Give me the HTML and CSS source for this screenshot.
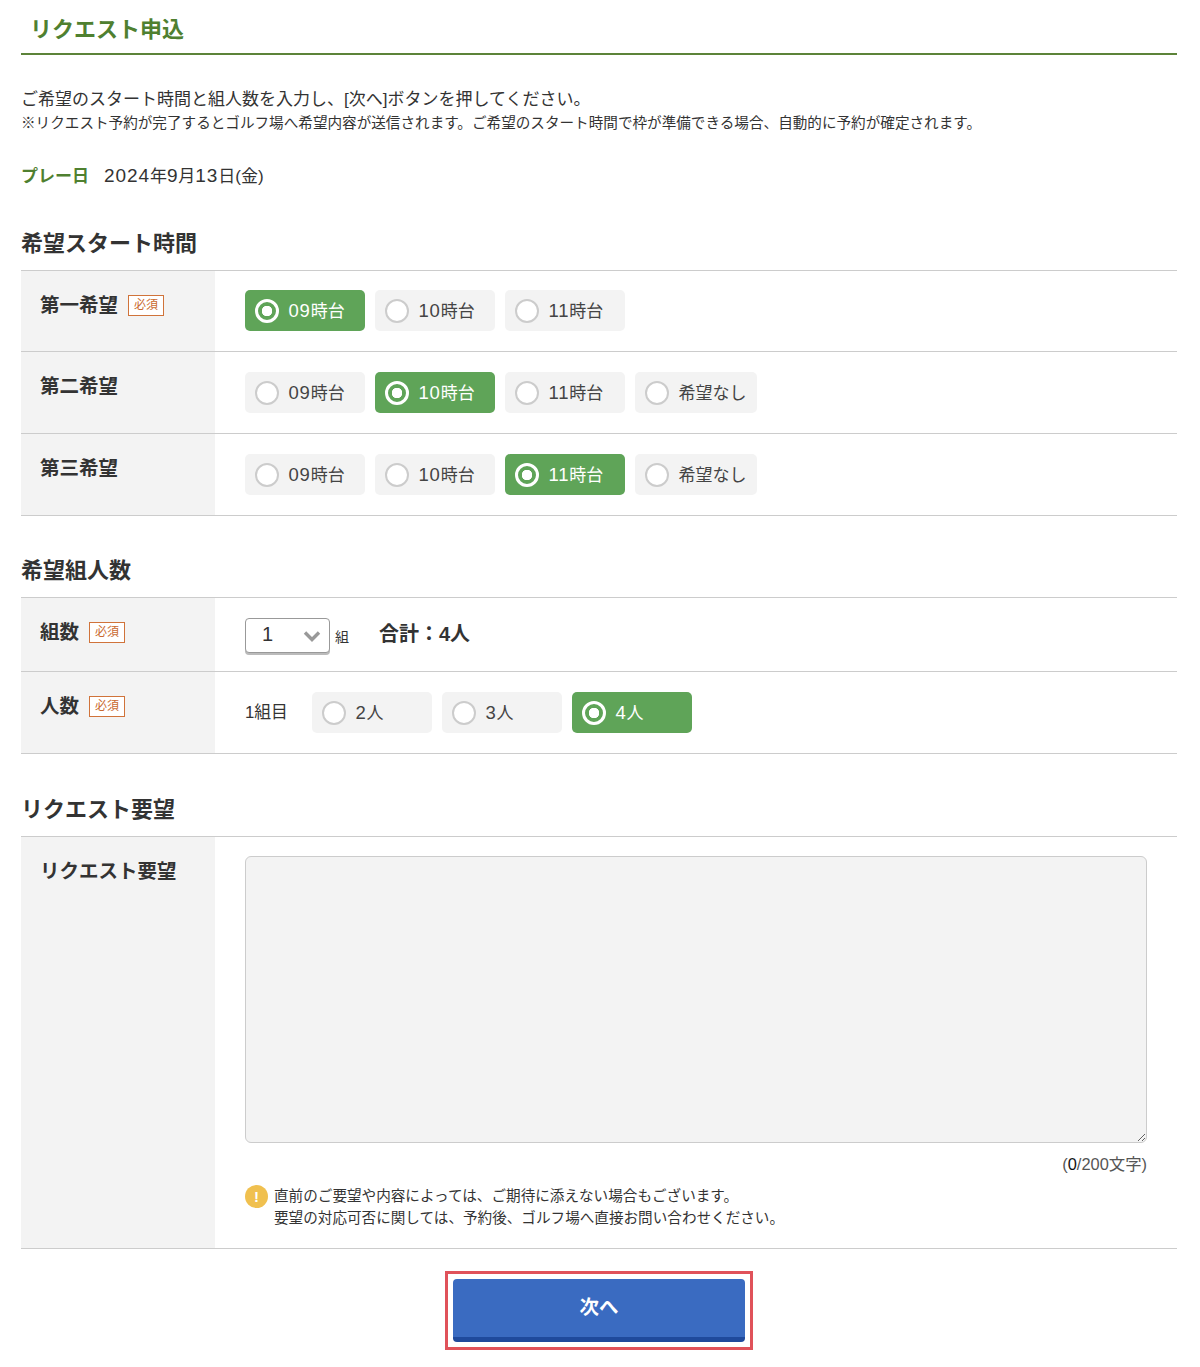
FILE: index.html
```html
<!DOCTYPE html>
<html lang="ja">
<head>
    <meta charset="UTF-8">
    <meta name="viewport" content="width=device-width, initial-scale=1.0">
    <title>リクエスト申込</title>
    <link rel="stylesheet" href="styles.css">
</head>
<body>
    <div class="page">
        <h1 class="page-title">リクエスト申込</h1>
        <p class="intro">ご希望のスタート時間と組人数を入力し、[次へ]ボタンを押してください。</p>
        <p class="intro-note">※リクエスト予約が完了するとゴルフ場へ希望内容が送信されます。ご希望のスタート時間で枠が準備できる場合、自動的に予約が確定されます。</p>
        <p class="play-date"><span class="play-date-label">プレー日</span><span class="num">2024</span>年<span class="num">9</span>月<span class="num">13</span>日(金)</p>

        <h2 class="section-title section-time">希望スタート時間</h2>
        <div class="form-table">
            <div class="form-row row-first">
                <div class="form-label">第一希望<span class="required">必須</span></div>
                <div class="form-field">
                    <label class="choice is-on"><span class="mark"></span><span class="choice-text"><span class="num">09</span>時台</span></label>
                    <label class="choice"><span class="mark"></span><span class="choice-text"><span class="num">10</span>時台</span></label>
                    <label class="choice"><span class="mark"></span><span class="choice-text"><span class="num">11</span>時台</span></label>
                </div>
            </div>
            <div class="form-row">
                <div class="form-label">第二希望</div>
                <div class="form-field">
                    <label class="choice"><span class="mark"></span><span class="choice-text"><span class="num">09</span>時台</span></label>
                    <label class="choice is-on"><span class="mark"></span><span class="choice-text"><span class="num">10</span>時台</span></label>
                    <label class="choice"><span class="mark"></span><span class="choice-text"><span class="num">11</span>時台</span></label>
                    <label class="choice choice-wide"><span class="mark"></span><span class="choice-text">希望なし</span></label>
                </div>
            </div>
            <div class="form-row">
                <div class="form-label">第三希望</div>
                <div class="form-field">
                    <label class="choice"><span class="mark"></span><span class="choice-text"><span class="num">09</span>時台</span></label>
                    <label class="choice"><span class="mark"></span><span class="choice-text"><span class="num">10</span>時台</span></label>
                    <label class="choice is-on"><span class="mark"></span><span class="choice-text"><span class="num">11</span>時台</span></label>
                    <label class="choice choice-wide"><span class="mark"></span><span class="choice-text">希望なし</span></label>
                </div>
            </div>
        </div>

        <h2 class="section-title section-party">希望組人数</h2>
        <div class="form-table">
            <div class="form-row">
                <div class="form-label">組数<span class="required">必須</span></div>
                <div class="form-field field-groups">
                    <span class="select-wrap">
                        <select class="group-select">
                            <option>1</option>
                            <option>2</option>
                        </select>
                        <svg class="select-arrow" width="18" height="12" viewBox="0 0 18 12"><path d="M2 2.5 L9 9.5 L16 2.5" fill="none" stroke="#999" stroke-width="3.4"/></svg>
                    </span>
                    <span class="unit">組</span>
                    <span class="total">合計：4人</span>
                </div>
            </div>
            <div class="form-row">
                <div class="form-label">人数<span class="required">必須</span></div>
                <div class="form-field">
                    <span class="group-name">1組目</span>
                    <label class="choice"><span class="mark"></span><span class="choice-text"><span class="num">2</span>人</span></label>
                    <label class="choice"><span class="mark"></span><span class="choice-text"><span class="num">3</span>人</span></label>
                    <label class="choice is-on"><span class="mark"></span><span class="choice-text"><span class="num">4</span>人</span></label>
                </div>
            </div>
        </div>

        <h2 class="section-title section-request">リクエスト要望</h2>
        <div class="form-table">
            <div class="form-row">
                <div class="form-label">リクエスト要望</div>
                <div class="form-field field-request">
                    <textarea class="request-text"></textarea>
                    <div class="counter">(<b>0</b>/200文字)</div>
                    <div class="caution">
                        <span class="caution-icon">!</span>
                        <p>直前のご要望や内容によっては、ご期待に添えない場合もございます。<br>要望の対応可否に関しては、予約後、ゴルフ場へ直接お問い合わせください。</p>
                    </div>
                </div>
            </div>
        </div>

        <div class="actions">
            <div class="next-frame">
                <button class="next-button">次へ</button>
            </div>
        </div>
    </div>
</body>
</html>
```

FILE: styles.css
```css
* {
    box-sizing: border-box;
}
body {
    margin: 0;
    font-family: "Liberation Sans", "Noto Sans CJK JP", sans-serif;
    color: #333;
    background: #fff;
}
p {
    margin: 0;
}
.page {
    margin: 0 23px 0 21px;
}
.num {
    font-size: 18.5px;
    letter-spacing: 0.8px;
}
.page-title {
    margin: 0;
    height: 55px;
    padding: 14px 0 0 9px;
    font-size: 22px;
    line-height: 32px;
    color: #4f8030;
    border-bottom: 2px solid #5c8339;
}
.intro {
    margin-top: 34px;
    font-size: 17px;
    line-height: 22px;
}
.intro-note {
    font-size: 14.6px;
    line-height: 24px;
}
.play-date {
    margin-top: 28px;
    font-size: 17px;
    line-height: 26px;
}
.play-date .num {
    font-size: 19px;
    letter-spacing: 0.9px;
}
.play-date-label {
    margin-right: 15px;
    font-weight: bold;
    color: #4f8030;
}

.section-title {
    margin: 0;
    font-size: 22px;
    line-height: 32px;
    padding-bottom: 10px;
}
.section-time {
    margin-top: 38px;
}
.section-party {
    margin-top: 39px;
}
.section-request {
    margin-top: 40px;
}

.form-table {
    border-top: 1px solid #ccc;
}
.form-row {
    display: flex;
    border-bottom: 1px solid #ccc;
}
.form-label {
    display: flex;
    align-items: flex-start;
    width: 194px;
    flex-shrink: 0;
    padding: 20px 0 0 19px;
    font-size: 19.5px;
    line-height: 28px;
    font-weight: bold;
    background: #f3f3f3;
}
.required {
    margin: 4px 0 0 10px;
    width: 36px;
    height: 21px;
    font-size: 12px;
    line-height: 19px;
    font-weight: normal;
    text-align: center;
    color: #c9692f;
    background: #fff;
    border: 1px solid #d0733a;
}
.form-field {
    display: flex;
    align-items: center;
    gap: 10px;
    flex: 1;
    padding: 20px 29px 20px 30px;
}
.row-first .form-field {
    padding-top: 19px;
}

.choice {
    display: flex;
    align-items: center;
    gap: 10px;
    width: 120px;
    height: 41px;
    padding-left: 9.5px;
    font-size: 17px;
    color: #444;
    background: #f3f3f3;
    border-radius: 5px;
}
.choice-wide {
    width: 122px;
}
.choice-text {
    margin-bottom: 3px;
}
.mark {
    width: 24px;
    height: 24px;
    flex-shrink: 0;
    background: #fff;
    border: 2px solid #ccc;
    border-radius: 50%;
}
.choice.is-on {
    color: #fff;
    background: #5fa458;
}
.is-on .mark {
    border: 3px solid #fff;
    background: radial-gradient(circle, #fff 0 5px, #5fa458 5.5px);
}

.field-groups {
    padding-bottom: 18px;
    gap: 0;
}
.select-wrap {
    position: relative;
    display: block;
    width: 85px;
    height: 35px;
}
.group-select {
    appearance: none;
    display: block;
    width: 85px;
    height: 35px;
    padding: 0 0 3px 16px;
    font: 20px "Liberation Sans", sans-serif;
    color: #333;
    background: #fff;
    border: 1px solid #999;
    border-radius: 4px;
    box-shadow: 0 2px 0 #bbb;
}
.select-arrow {
    position: absolute;
    top: 12px;
    right: 9px;
    pointer-events: none;
}
.unit {
    margin-left: 5px;
    font-size: 14px;
}
.total {
    margin-bottom: 6px;
    margin-left: 30px;
    font-size: 20px;
    font-weight: bold;
}
.group-name {
    width: 57px;
    margin-bottom: 3px;
    font-size: 16.8px;
}

.field-request {
    display: block;
    padding-top: 19px;
    padding-bottom: 0;
}
.request-text {
    display: block;
    width: 902px;
    height: 287px;
    background: #f3f3f3;
    border: 1px solid #ccc;
    border-radius: 6px;
}
.counter {
    width: 902px;
    margin-top: 10px;
    text-align: right;
    font-size: 16.4px;
    line-height: 22px;
    color: #555;
}
.counter b {
    font-weight: normal;
    color: #111;
}
.caution {
    display: flex;
    gap: 6px;
    margin-top: 10px;
    padding-bottom: 19px;
    font-size: 14.6px;
    line-height: 22px;
}
.caution-icon {
    width: 23px;
    height: 23px;
    flex-shrink: 0;
    font-size: 15px;
    line-height: 23px;
    font-weight: bold;
    text-align: center;
    color: #fff;
    background: #f0c04f;
    border-radius: 50%;
}

.actions {
    display: flex;
    justify-content: center;
    padding: 22px 0 17px;
}
.next-frame {
    width: 308px;
    height: 79px;
    padding: 5px;
    border: 3px solid #e0525a;
}
.next-button {
    display: block;
    width: 292px;
    height: 63px;
    padding: 0 0 6px;
    font: bold 19.5px "Liberation Sans", "Noto Sans CJK JP", sans-serif;
    color: #fff;
    background: #3a6bc1;
    border: 0;
    border-bottom: 5px solid #1f4a9c;
    border-radius: 4px;
}
```
